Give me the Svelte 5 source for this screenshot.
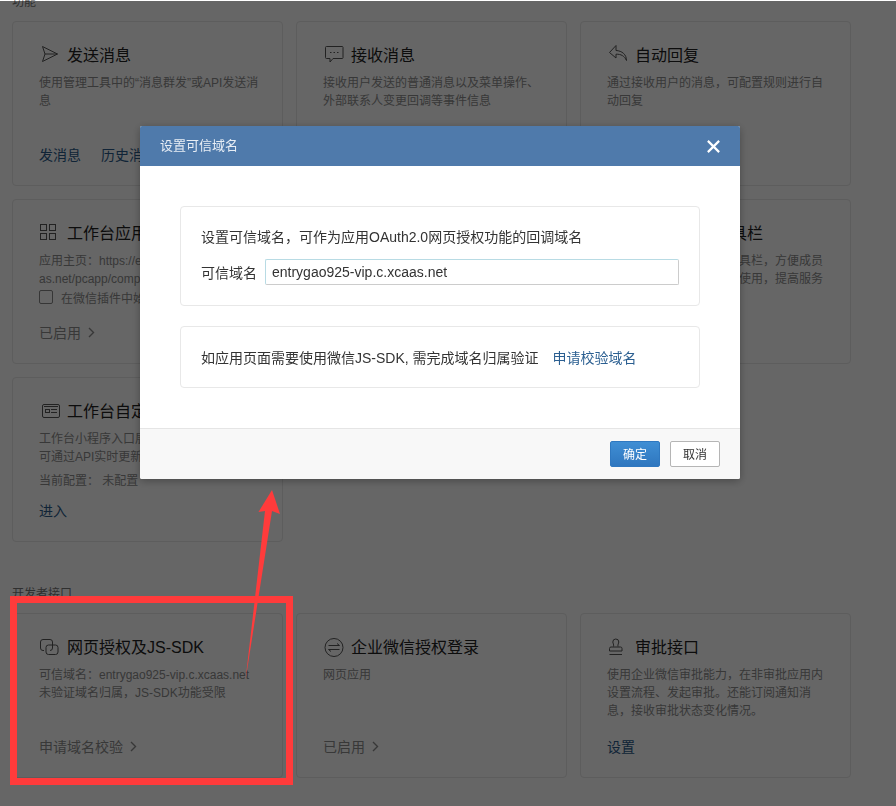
<script>
	// cards of the two sections; icon names map to the svg blocks below
	const features = [
		{ icon: 'send', title: '发送消息', lines: ['使用管理工具中的“消息群发”或API发送消息'], links: ['发消息', '历史消息'] },
		{ icon: 'chat', title: '接收消息', lines: ['接收用户发送的普通消息以及菜单操作、外部联系人变更回调等事件信息'], links: ['设置'] },
		{ icon: 'reply', title: '自动回复', lines: ['通过接收用户的消息，可配置规则进行自动回复'], links: ['设置'] },
		{ icon: 'grid', title: '工作台应用主页', lines: ['应用主页：https://entrygao925-vip.c.xca', 'as.net/pcapp/companyapp'], check: '在微信插件中始终打开', muted: '已启用' },
		{ icon: 'grid', title: '网页应用', lines: ['配置网页应用的访问地址'], muted: '已启用' },
		{ icon: 'grid', title: '配置到聊天工具栏', lines: ['可以将应用配置到聊天工具栏，方便成员', '在与外部联系人聊天窗口使用，提高服务'], muted: '未启用' },
		{ icon: 'card', title: '工作台自定义展示', lines: ['工作台小程序入口展示应用数据', '可通过API实时更新数据'], config: '当前配置： 未配置', links: ['进入'] }
	];
	const apis = [
		{ icon: 'copy', title: '网页授权及JS-SDK', lines: ['可信域名：entrygao925-vip.c.xcaas.net', '未验证域名归属，JS-SDK功能受限'], muted: '申请域名校验' },
		{ icon: 'swap', title: '企业微信授权登录', lines: ['网页应用'], muted: '已启用' },
		{ icon: 'stamp', title: '审批接口', lines: ['使用企业微信审批能力，在非审批应用内设置流程、发起审批。还能订阅通知消息，接收审批状态变化情况。'], links: ['设置'] }
	];
	let domain = $state('entrygao925-vip.c.xcaas.net');
</script>

{#snippet icon(name)}
	<svg class="icon" viewBox="0 0 22 22" fill="none" stroke="currentColor">
		{#if name === 'send'}
			<path d="M3.500 3.500 18.500 11 3.500 18.500 6 11ZM6 11H18.500" />
		{:else if name === 'chat'}
			<path d="M3.500 3.500H19.500A.8.8 0 0 1 20 4.200V14.800A.8.8 0 0 1 19.500 15.500H10L7 19V15.500H3.500A1 1 0 0 1 2.500 14.500V4.500A1 1 0 0 1 3.500 3.500Z" />
			<path d="M7 9.500H8.500M10.500 9.500H12M14 9.500H15.500" />
		{:else if name === 'reply'}
			<path d="M9 2.500 2.500 9.500 9 15V11.200C14 11 17.500 13 19.500 17.500 19.500 11.500 15 7.800 9 7.500Z" stroke-linejoin="round" />
		{:else if name === 'grid'}
			<rect x="1.500" y="3.500" width="6" height="6" /><rect x="10.500" y="3.500" width="6" height="6" />
			<rect x="1.500" y="12.500" width="6" height="6" /><rect x="10.500" y="12.500" width="6" height="6" />
		{:else if name === 'card'}
			<rect x="3.500" y="5.500" width="17" height="13" rx="1.500" />
			<rect x="6.500" y="10.500" width="4" height="3" /><path d="M12 10.500H18M12 13.500H18M5 7.500H19" />
		{:else if name === 'copy'}
			<path d="M5 15.500H4A2.500 2.500 0 0 1 1.500 13V7A2.500 2.500 0 0 1 4 4.500H11A2.500 2.500 0 0 1 13.500 7V13A2.500 2.500 0 0 1 11 15.500" />
			<path d="M7 12.500A2.500 2.500 0 0 1 9.500 10H16.500A2.500 2.500 0 0 1 19 12.500V17A2.500 2.500 0 0 1 16.500 19.500H9.500A2.500 2.500 0 0 1 7 17Z" />
		{:else if name === 'swap'}
			<circle cx="11" cy="12.500" r="9" />
			<path d="M5.500 10.500H16.500L14 8.500M16.500 14.500H5.500L8 16.500" />
		{:else if name === 'stamp'}
			<path d="M6.500 11.500C7 9.500 6 8.500 5.800 7A3 3 0 0 1 11.800 7C11.600 8.500 10.600 9.500 11 11.500" />
			<path d="M2.500 16V13.500A1.500 1.500 0 0 1 4 12H13.500A1.500 1.500 0 0 1 15 13.500V16ZM2.500 19.500H15" />
		{/if}
	</svg>
{/snippet}

{#snippet card(item)}
	<div class="card">
		<div class="card-title">{@render icon(item.icon)}<span>{item.title}</span></div>
		{#each item.lines as line}
			<p class="desc">{line}</p>
		{/each}
		{#if item.check}
			<label class="check"><span class="box"></span>{item.check}</label>
		{/if}
		{#if item.config}
			<p class="desc config">{item.config}</p>
		{/if}
		<div class="actions">
			{#if item.links}
				{#each item.links as link}
					<span class="link">{link}</span>
				{/each}
			{/if}
			{#if item.muted}
				<span class="muted">{item.muted}<svg class="chev" viewBox="0 0 7 11" fill="none" stroke="currentColor" stroke-width="1.4"><path d="M1 1 5.500 5.500 1 10" /></svg></span>
			{/if}
		</div>
	</div>
{/snippet}

<div class="page">
	<h3>功能</h3>
	<div class="grid">
		{#each features as item}
			{@render card(item)}
		{/each}
	</div>
	<h3 class="second">开发者接口</h3>
	<div class="grid">
		{#each apis as item}
			{@render card(item)}
		{/each}
	</div>
</div>

<div class="overlay">
	<div class="modal">
		<div class="modal-head">
			<span class="modal-title">设置可信域名</span>
			<svg class="close" viewBox="0 0 12 12" stroke="#fff" stroke-width="2"><path d="M.8.8 11.200 11.200M11.200.8.8 11.200" /></svg>
		</div>
		<div class="modal-body">
			<div class="panel">
				<p>设置可信域名，可作为应用OAuth2.0网页授权功能的回调域名</p>
				<div class="field">
					<span>可信域名</span>
					<input bind:value={domain} />
				</div>
			</div>
			<div class="panel second-panel">
				<span>如应用页面需要使用微信JS-SDK, 需完成域名归属验证</span>
				<span class="verify">申请校验域名</span>
			</div>
		</div>
		<div class="modal-foot">
			<button class="ok">确定</button>
			<button class="cancel">取消</button>
		</div>
	</div>
</div>

<!-- red annotation drawn on top of the screenshot -->
<svg class="marks" viewBox="0 0 896 806">
	<rect x="13.500" y="599.500" width="276" height="182" fill="none" stroke="#ff3b3b" stroke-width="7" />
	<path d="M272 490 280 514 272 511 245.500 680 265 511 258.500 512Z" fill="#ff3b3b" />
</svg>

<style>
	:global(html), :global(body) {
		margin: 0;
		height: 100%;
		overflow: hidden;
		background: #fff;
	}

	.page {
		margin-top: -7px;
		padding-left: 12px;
		font-family: "Liberation Sans", "Noto Sans CJK SC", sans-serif;
	}

	h3 {
		margin: 0 0 10px;
		font-size: 12px;
		font-weight: normal;
		line-height: 18px;
		color: #777;
	}

	h3.second {
		margin-top: 43px;
	}

	.grid {
		display: grid;
		grid-template-columns: repeat(3, 271px);
		grid-auto-rows: 165px;
		gap: 13px;
	}

	.card {
		box-sizing: border-box;
		display: flex;
		flex-direction: column;
		padding: 21px 22px 20px 26px;
		border: 1px solid #e8e8e8;
		border-radius: 4px;
		overflow: hidden;
	}

	.card-title {
		display: flex;
		align-items: center;
		height: 22px;
		margin-bottom: 9px;
		font-size: 16px;
		color: #222;
	}

	.icon {
		flex: none;
		width: 22px;
		height: 22px;
		margin-right: 6px;
		color: #555;
	}

	.desc {
		margin: 0;
		font-size: 12px;
		line-height: 18px;
		color: #8c8c8c;
		word-break: break-all;
	}

	.config {
		margin-top: 6px;
	}

	.check {
		display: flex;
		align-items: center;
		height: 18px;
		font-size: 12px;
		color: #8c8c8c;
	}

	.box {
		box-sizing: border-box;
		width: 14px;
		height: 14px;
		margin-right: 8px;
		border: 1px solid #888;
		border-radius: 2px;
	}

	.actions {
		display: flex;
		gap: 20px;
		margin-top: auto;
		font-size: 14px;
		line-height: 20px;
		white-space: nowrap;
	}

	.link {
		color: #2b5a8a;
	}

	.muted {
		color: #8c8c8c;
	}

	.chev {
		width: 7px;
		height: 11px;
		margin-left: 7px;
	}

	.overlay {
		position: fixed;
		inset: 1px 0 0;
		background: rgba(0, 0, 0, 0.6);
		font-family: "Liberation Sans", "Noto Sans CJK SC", sans-serif;
	}

	.modal {
		width: 600px;
		margin: 125px 0 0 140px;
		background: #fff;
		border-radius: 2px;
		box-shadow: 0 2px 8px rgba(0, 0, 0, 0.3);
		color: #333;
	}

	.modal-head {
		display: flex;
		align-items: center;
		justify-content: space-between;
		height: 40px;
		padding: 0 20px;
		background: #4f7aab;
		border-radius: 2px 2px 0 0;
		font-size: 13px;
		color: #e8eef5;
	}

	.modal-title {
		padding-bottom: 3px;
	}

	.close {
		width: 13px;
		height: 13px;
	}

	.modal-body {
		padding: 40px 40px 40px;
		font-size: 14px;
	}

	.panel {
		box-sizing: border-box;
		height: 100px;
		padding: 20px;
		border: 1px solid #e8e8e8;
		border-radius: 4px;
	}

	.panel p {
		margin: 0 0 12px;
		line-height: 20px;
	}

	.field {
		display: flex;
		align-items: center;
		gap: 8px;
	}

	input {
		box-sizing: border-box;
		flex: 1;
		height: 26px;
		padding: 0 6px;
		border: 1px solid #ccc;
		border-top-color: #b8dbe4;
		border-left-color: #b8dbe4;
		border-radius: 2px;
		outline: none;
		font: inherit;
		color: #333;
	}

	.second-panel {
		display: flex;
		align-items: center;
		gap: 14px;
		height: 62px;
		margin-top: 20px;
	}

	.verify {
		color: #2b5f91;
	}

	.modal-foot {
		display: flex;
		justify-content: flex-end;
		gap: 10px;
		padding: 12px 20px;
		background: #f8f8f8;
		border-top: 1px solid #e5e5e5;
		border-radius: 0 0 2px 2px;
	}

	button {
		width: 50px;
		height: 26px;
		padding: 0 0 2px;
		border-radius: 2px;
		font: inherit;
		font-size: 12px;
	}

	.ok {
		border: 1px solid #2f78c0;
		background: linear-gradient(#3f8ed4, #2f77bf);
		color: #fff;
	}

	.cancel {
		border: 1px solid #b5b5b5;
		background: #fff;
		color: #333;
	}

	.marks {
		position: fixed;
		top: 0;
		left: 0;
		width: 896px;
		height: 806px;
		pointer-events: none;
	}
</style>
